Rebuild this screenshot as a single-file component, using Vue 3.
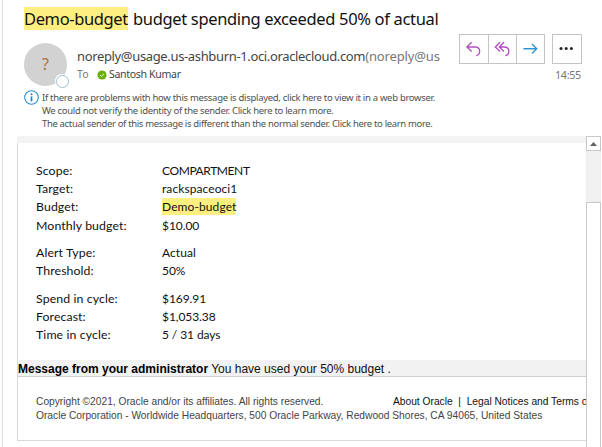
<script setup>
const groups = [
  [
    ['Scope:', 'COMPARTMENT', 'v-comp'],
    ['Target:', 'rackspaceoci1', 'v-target'],
    ['Budget:', 'Demo-budget', 'v-mark'],
    ['Monthly budget:', '$10.00', ''],
  ],
  [
    ['Alert Type:', 'Actual', 'v-target'],
    ['Threshold:', '50%', ''],
  ],
  [
    ['Spend in cycle:', '$169.91', ''],
    ['Forecast:', '$1,053.38', ''],
    ['Time in cycle:', '5 / 31 days', ''],
  ],
]
</script>

<template>
  <div class="window">
    <header class="header">
      <h1 class="title"><mark>Demo-budget</mark><span class="rest">budget spending exceeded 50% of actual</span></h1>
      <div class="sender-row">
        <div class="avatar">?<span class="presence"></span></div>
        <div class="sender">
          <div class="from">noreply@usage.us-ashburn-1.oci.oraclecloud.com<span>(noreply@usa</span></div>
          <div class="to">
            <span class="to-label">To</span>
            <svg class="check" viewBox="0 0 10 10"><circle cx="5" cy="5" r="4.6" fill="#6bb10c" /><path d="M3 5.1 4.4 6.3 7 3.9" fill="none" stroke="#e9f5d8" stroke-width="1" /></svg>
            <span>Santosh Kumar</span>
          </div>
        </div>
        <div class="actions">
          <div class="buttons">
            <div class="group">
              <button><svg viewBox="0 0 28 28" stroke="#b14fc0"><path d="M11.7 7.3 6.9 12 11.7 16.6M7.2 12H16.3A4.5 4.5 0 0 1 16.3 20.7" /></svg></button>
              <button><svg viewBox="0 0 28 28" stroke="#b14fc0"><path d="M11 7.3 6.3 12 11 16.6M15 7.3 10.3 12 15 16.6M10.6 12H16A4.4 4.4 0 0 1 16.2 20.7" /></svg></button>
              <button><svg viewBox="0 0 28 28" stroke="#2b93d6"><path d="M6.4 13.7H19.6M15 9 19.7 13.7 15 18.4" /></svg></button>
            </div>
            <button class="more"><svg viewBox="0 0 28 28"><g fill="#222"><circle cx="8" cy="13.5" r="1.5" /><circle cx="13.2" cy="13.5" r="1.5" /><circle cx="18.4" cy="13.5" r="1.5" /></g></svg></button>
          </div>
          <div class="time">14:55</div>
        </div>
      </div>
      <div class="notice">
        <svg class="info" viewBox="0 0 15 15"><circle cx="7.5" cy="7.5" r="6.8" fill="none" stroke="#2b8fd0" stroke-width="1.1" /><circle cx="7.5" cy="4.3" r="1" fill="#1b82c8" /><path d="M7.5 6.4V11.4" stroke="#1b82c8" stroke-width="1.7" /></svg>
        <div class="lines">
          <div class="n1">If there are problems with how this message is displayed, click here to view it in a web browser.</div>
          <div class="n2">We could not verify the identity of the sender. Click here to learn more.</div>
          <div class="n3">The actual sender of this message is different than the normal sender. Click here to learn more.</div>
        </div>
      </div>
    </header>
    <main class="main">
      <div class="content">
        <div class="strip"></div>
        <section class="panel">
          <div class="details">
            <dl v-for="(g, i) in groups" :key="i">
              <template v-for="r in g" :key="r[0]">
                <dt>{{ r[0] }}</dt>
                <dd><span :class="r[2]">{{ r[1] }}</span></dd>
              </template>
            </dl>
          </div>
          <div class="message"><b>Message from your administrator</b> You have used your 50% budget .</div>
          <footer class="footer">
            <div class="legal"><span class="copy">Copyright ©2021, Oracle and/or its affiliates. All rights reserved.</span><span class="links">About Oracle&nbsp; |&nbsp; Legal Notices and Terms o</span></div>
            <div class="address">Oracle Corporation - Worldwide Headquarters, 500 Oracle Parkway, Redwood Shores, CA 94065, United States</div>
          </footer>
        </section>
      </div>
      <div class="scrollbar">
        <div class="up"><svg viewBox="0 0 7 4"><path d="M0 4 3.5 0 7 4Z" fill="#606060" /></svg></div>
        <div class="thumb"></div>
      </div>
    </main>
  </div>
</template>

<style>
body { background: #fff; overflow: hidden; }
</style>

<style scoped>
* { box-sizing: border-box; }
.window {
  width: 602px; height: 447px; padding-left: 2px; overflow: hidden;
  display: flex; flex-direction: column;
  font-family: "Noto Sans", "Open Sans", sans-serif; color: #444; white-space: nowrap;
}
.header { height: 136px; border-left: 1px solid #dedede; padding: 7px 0 0 21px; flex: none; }
.title { display: flex; gap: 5px; margin: 0; font-size: 16.5px; font-weight: 400; line-height: 24px; height: 23px; color: #111; letter-spacing: -0.34px; }
mark { background: #ffee80; color: inherit; width: 104px; height: 23px; letter-spacing: -0.38px; }
.sender-row { display: flex; height: 57px; padding-top: 4px; }
.avatar { position: relative; width: 43px; height: 43px; margin-top: 9px; border-radius: 50%; background: #d2d2d2; color: #b5713a; font-size: 16px; line-height: 43px; text-align: center; }
.presence { position: absolute; left: 31px; top: 31px; width: 13px; height: 13px; border-radius: 50%; background: #fff; border: 1px solid #fff; }
.presence::after { content: ""; display: block; width: 11px; height: 11px; border: 1px solid #a0c0cc; border-radius: 50%; }
.sender { width: 363px; margin-left: 10px; padding-top: 13px; overflow: hidden; }
.from { font-size: 13px; line-height: 18px; letter-spacing: -0.35px; }
.from span { color: #777; letter-spacing: -0.15px; }
.to { display: flex; align-items: center; font-size: 10.6px; line-height: 15px; letter-spacing: -0.35px; margin-top: 2px; }
.to-label { width: 20px; color: #777; letter-spacing: 0; }
.check { width: 10px; height: 10px; margin-right: 2px; }
.actions { margin-left: 19px; width: 122px; }
.buttons { display: flex; gap: 7px; }
.group { display: flex; width: 86px; flex: none; }
button { flex: none; width: 29.66px; height: 30px; padding: 0; margin: 0 -1px 0 0; border: 1px solid #c4c4c4; background: #fff; }
.group button:last-child { margin-right: 0; width: 28.66px; }
.more { margin: 0; }
button svg { display: block; width: 28px; height: 28px; fill: none; stroke-width: 1.35; }
.time { font-size: 10.8px; line-height: 15px; margin-top: 3px; text-align: right; color: #777; letter-spacing: -0.3px; }
.notice { display: flex; }
.info { width: 15px; height: 15px; margin-top: 3px; }
.lines { margin-left: 3px; padding-top: 4px; font-size: 9.5px; line-height: 13.2px; letter-spacing: -0.3px; color: #505050; }
.n3 { letter-spacing: -0.34px; }
.main { display: flex; height: 311px; border-left: 1px solid #dedede; padding-left: 14px; }
.content { width: 569px; overflow: hidden; }
.strip { height: 7px; background: #f3f3f3; }
.panel { height: 298px; border-left: 1px solid #d8d8d8; border-bottom: 1px solid #d8d8d8; }
.details { height: 217px; padding: 19px 0 0 18px; font-family: Lato, sans-serif; font-size: 12px; line-height: 18.2px; color: #111; display: flex; flex-direction: column; gap: 9.2px; }
dl { display: grid; grid-template-columns: 126px 1fr; margin: 0; }
dt { font-size: 12.3px; letter-spacing: 0.1px; }
dd { margin: 0; letter-spacing: -0.08px; }
.v-mark { background: #ffee80; letter-spacing: 0.1px; padding: 1px 0; }
.v-target { letter-spacing: 0.08px; }
.v-comp { letter-spacing: -0.4px; }
.message { height: 17px; background: #f2f2f2; border-bottom: 1px solid #d0d0d0; font-family: "Liberation Sans", sans-serif; font-size: 12px; line-height: 18px; color: #111; }
.message b { color: #000; }
.footer { padding: 18px 0 0 18px; font-family: "Liberation Sans", sans-serif; font-size: 10.23px; line-height: 14px; color: #444; }
.legal { display: flex; }
.copy { width: 357px; flex: none; }
.links { color: #111; flex: none; }
.scrollbar { width: 15px; background: #f0f0f0; display: flex; flex-direction: column; flex: none; }
.up { height: 15px; border: 1px solid #c8c8c8; background: #fff; display: flex; align-items: center; justify-content: center; }
.up svg { width: 7px; height: 4px; }
.thumb { margin-top: 51px; flex: 1; border: 1px solid #c8c8c8; border-bottom: 0; background: #fff; }
</style>
